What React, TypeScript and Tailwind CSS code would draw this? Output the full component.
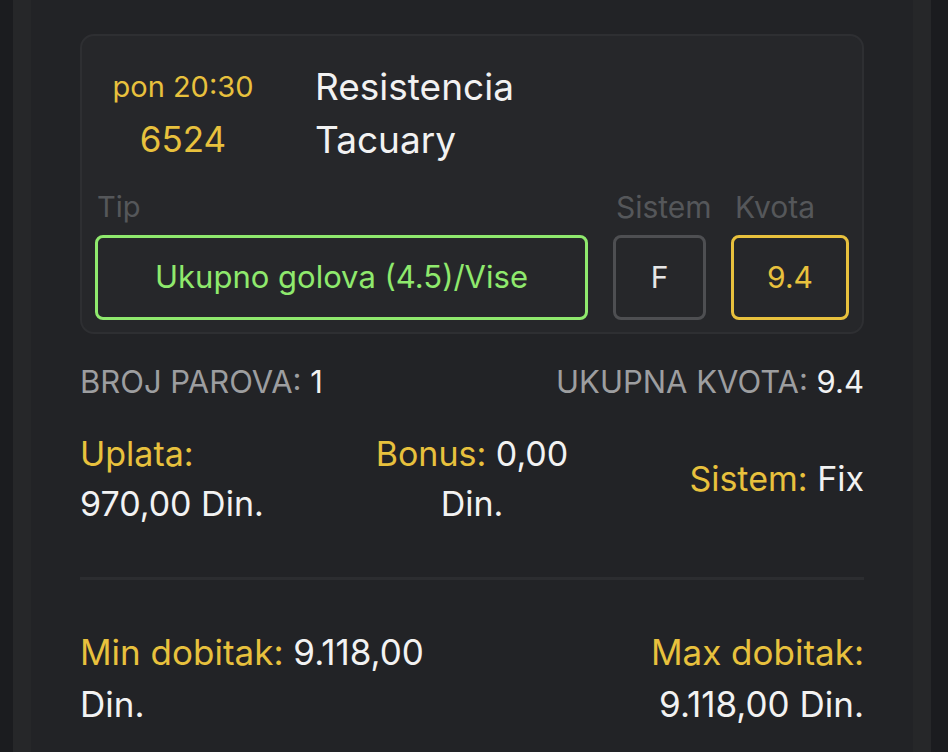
const font = { fontFamily: 'Inter, "Noto Sans", sans-serif' };

function MatchCard() {
  return (
    <div className="rounded-[14px] border-2 border-[#2e2f32] bg-[#26272a] px-[13px] pt-[24px] pb-[12px]">
      <div className="flex">
        <div className="w-[176px] shrink-0 text-center text-[#e8c13d]">
          <div className="whitespace-nowrap text-[29px] leading-[53px]">pon 20:30</div>
          <div className="text-[35px] leading-[53px]">6524</div>
        </div>
        <div className="ml-[44px] text-[37px] text-[#f2f2f2]">
          <div className="leading-[53px]">Resistencia</div>
          <div className="leading-[53px]">Tacuary</div>
        </div>
      </div>

      <div className="mt-[24px] flex gap-[25px]">
        <div className="flex flex-1 flex-col">
          <div className="pl-[2px] text-[29px] leading-[34px] text-[#55575a]">Tip</div>
          <div className="mt-[11px] flex h-[85px] items-center justify-center rounded-[8px] border-[3px] border-[#8fe96d] text-[31px] text-[#8fe96d]">
            Ukupno golova (4.5)/Vise
          </div>
        </div>
        <div className="flex w-[93px] flex-col">
          <div className="whitespace-nowrap pl-[3px] text-[30px] leading-[34px] text-[#55575a]">Sistem</div>
          <div className="mt-[11px] flex h-[85px] items-center justify-center rounded-[8px] border-[3px] border-[#4e4f52] text-[30px] text-[#e6e6e6]">
            F
          </div>
        </div>
        <div className="flex w-[118px] flex-col">
          <div className="pl-[4px] text-[30px] leading-[34px] text-[#55575a]">Kvota</div>
          <div className="mt-[11px] flex h-[85px] items-center justify-center rounded-[8px] border-[3px] border-[#e8c13d] text-[30px] text-[#e8c13d]">
            9.4
          </div>
        </div>
      </div>
    </div>
  );
}

export default function App() {
  return (
    <div className="min-h-screen bg-[#1b1c1f]" style={font}>
      <div className="ml-[13px] min-h-[752px] w-[918px] border-x-[18px] border-[#262729] bg-[#222326] px-[49px] pt-[34px]">
        <MatchCard />

        <div className="mt-[30px] flex justify-between text-[31px] leading-[36px] text-[#9d9ea0]">
          <div>
            BROJ PAROVA: <span className="text-[#f2f2f2]">1</span>
          </div>
          <div>
            UKUPNA KVOTA: <span className="text-[#f2f2f2]">9.4</span>
          </div>
        </div>

        <div className="mt-[29px] grid grid-cols-3 text-[34px] leading-[50px] text-[#f2f2f2]">
          <div>
            <div className="text-[#e8c13d]">Uplata:</div>
            <div>970,00 Din.</div>
          </div>
          <div className="text-center">
            <div className="whitespace-nowrap">
              <span className="text-[#e8c13d]">Bonus:</span> 0,00
            </div>
            <div>Din.</div>
          </div>
          <div className="flex items-center justify-end">
            <div>
              <span className="text-[#e8c13d]">Sistem:</span> Fix
            </div>
          </div>
        </div>

        <div className="mt-[48px] h-[3px] bg-[#2c2d30]" />

        <div className="mt-[46px] flex justify-between text-[35px] leading-[52px] text-[#f2f2f2]">
          <div>
            <div>
              <span className="text-[#e8c13d]">Min dobitak:</span> 9.118,00
            </div>
            <div>Din.</div>
          </div>
          <div className="text-right">
            <div className="text-[#e8c13d]">Max dobitak:</div>
            <div>9.118,00 Din.</div>
          </div>
        </div>
      </div>
    </div>
  );
}
